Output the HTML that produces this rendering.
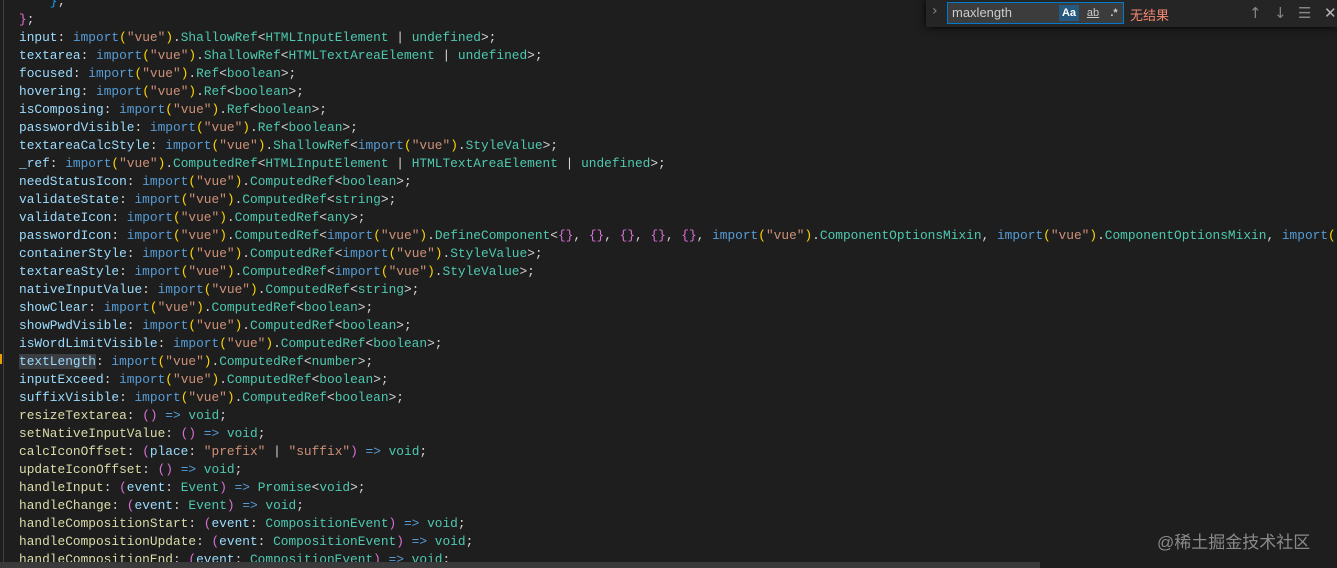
<!DOCTYPE html>
<html><head><meta charset="utf-8"><style>
html,body{margin:0;padding:0;background:#1e1e1e;width:1337px;height:568px;overflow:hidden;position:relative}
#code{position:absolute;left:19px;top:-7px;font-family:"Liberation Mono",monospace;font-size:12.83px;line-height:18px;color:#d4d4d4;white-space:pre}
.p{color:#9cdcfe}.f{color:#dcdcaa}.k{color:#569cd6}.s{color:#ce9178}.t{color:#4ec9b0}.y{color:#ffd700}.m{color:#da70d6}.b{color:#179fff}
.sel{background:#3a3d41}
#guide{position:absolute;left:3px;top:0;width:1px;height:568px;background:#404040}
#mark{position:absolute;left:0;top:354px;width:2px;height:10px;background:#e5a000}
#find{position:absolute;left:926px;top:0;width:411px;height:27px;background:#252526;box-shadow:0 0 8px #000}
#inp{position:absolute;left:947px;top:2px;width:175px;height:20px;border:1px solid #007acc;background:#3c3c3c;font:13px "Liberation Sans",sans-serif;color:#ccc;line-height:20px;box-sizing:content-box}
#inp span.v{position:absolute;left:4px;top:0}
.opt{position:absolute;top:2px;height:16px;font:11px "Liberation Sans",sans-serif;color:#ccc;line-height:16px;text-align:center}
#nores{position:absolute;left:1130px;top:5px;font:13px "Liberation Sans","Noto Sans CJK SC",sans-serif;color:#f48771}
.ic{position:absolute;top:4px;color:#c5c5c5;font:15px "DejaVu Sans",sans-serif;opacity:.6}
#wm{position:absolute;left:1157px;top:528px;font:17px "Liberation Sans","Noto Sans CJK SC",sans-serif;color:#8a8a8a}
#sb{position:absolute;left:0;top:562px;width:1040px;height:6px;background:#3a3a3a}
</style></head><body>
<div id="guide"></div>
<div id="code"><span>    </span><span class="b">}</span>;
<span class="m">}</span>;
<span class="p">input</span>: <span class="k">import</span><span class="y">(</span><span class="s">"vue"</span><span class="y">)</span>.<span class="t">ShallowRef</span>&lt;<span class="t">HTMLInputElement</span> | <span class="t">undefined</span>&gt;;
<span class="p">textarea</span>: <span class="k">import</span><span class="y">(</span><span class="s">"vue"</span><span class="y">)</span>.<span class="t">ShallowRef</span>&lt;<span class="t">HTMLTextAreaElement</span> | <span class="t">undefined</span>&gt;;
<span class="p">focused</span>: <span class="k">import</span><span class="y">(</span><span class="s">"vue"</span><span class="y">)</span>.<span class="t">Ref</span>&lt;<span class="t">boolean</span>&gt;;
<span class="p">hovering</span>: <span class="k">import</span><span class="y">(</span><span class="s">"vue"</span><span class="y">)</span>.<span class="t">Ref</span>&lt;<span class="t">boolean</span>&gt;;
<span class="p">isComposing</span>: <span class="k">import</span><span class="y">(</span><span class="s">"vue"</span><span class="y">)</span>.<span class="t">Ref</span>&lt;<span class="t">boolean</span>&gt;;
<span class="p">passwordVisible</span>: <span class="k">import</span><span class="y">(</span><span class="s">"vue"</span><span class="y">)</span>.<span class="t">Ref</span>&lt;<span class="t">boolean</span>&gt;;
<span class="p">textareaCalcStyle</span>: <span class="k">import</span><span class="y">(</span><span class="s">"vue"</span><span class="y">)</span>.<span class="t">ShallowRef</span>&lt;<span class="k">import</span><span class="y">(</span><span class="s">"vue"</span><span class="y">)</span>.<span class="t">StyleValue</span>&gt;;
<span class="p">_ref</span>: <span class="k">import</span><span class="y">(</span><span class="s">"vue"</span><span class="y">)</span>.<span class="t">ComputedRef</span>&lt;<span class="t">HTMLInputElement</span> | <span class="t">HTMLTextAreaElement</span> | <span class="t">undefined</span>&gt;;
<span class="p">needStatusIcon</span>: <span class="k">import</span><span class="y">(</span><span class="s">"vue"</span><span class="y">)</span>.<span class="t">ComputedRef</span>&lt;<span class="t">boolean</span>&gt;;
<span class="p">validateState</span>: <span class="k">import</span><span class="y">(</span><span class="s">"vue"</span><span class="y">)</span>.<span class="t">ComputedRef</span>&lt;<span class="t">string</span>&gt;;
<span class="p">validateIcon</span>: <span class="k">import</span><span class="y">(</span><span class="s">"vue"</span><span class="y">)</span>.<span class="t">ComputedRef</span>&lt;<span class="t">any</span>&gt;;
<span class="p">passwordIcon</span>: <span class="k">import</span><span class="y">(</span><span class="s">"vue"</span><span class="y">)</span>.<span class="t">ComputedRef</span>&lt;<span class="k">import</span><span class="y">(</span><span class="s">"vue"</span><span class="y">)</span>.<span class="t">DefineComponent</span>&lt;<span class="m">{}</span>, <span class="m">{}</span>, <span class="m">{}</span>, <span class="m">{}</span>, <span class="m">{}</span>, <span class="k">import</span><span class="y">(</span><span class="s">"vue"</span><span class="y">)</span>.<span class="t">ComponentOptionsMixin</span>, <span class="k">import</span><span class="y">(</span><span class="s">"vue"</span><span class="y">)</span>.<span class="t">ComponentOptionsMixin</span>, <span class="k">import</span><span class="y">(</span>
<span class="p">containerStyle</span>: <span class="k">import</span><span class="y">(</span><span class="s">"vue"</span><span class="y">)</span>.<span class="t">ComputedRef</span>&lt;<span class="k">import</span><span class="y">(</span><span class="s">"vue"</span><span class="y">)</span>.<span class="t">StyleValue</span>&gt;;
<span class="p">textareaStyle</span>: <span class="k">import</span><span class="y">(</span><span class="s">"vue"</span><span class="y">)</span>.<span class="t">ComputedRef</span>&lt;<span class="k">import</span><span class="y">(</span><span class="s">"vue"</span><span class="y">)</span>.<span class="t">StyleValue</span>&gt;;
<span class="p">nativeInputValue</span>: <span class="k">import</span><span class="y">(</span><span class="s">"vue"</span><span class="y">)</span>.<span class="t">ComputedRef</span>&lt;<span class="t">string</span>&gt;;
<span class="p">showClear</span>: <span class="k">import</span><span class="y">(</span><span class="s">"vue"</span><span class="y">)</span>.<span class="t">ComputedRef</span>&lt;<span class="t">boolean</span>&gt;;
<span class="p">showPwdVisible</span>: <span class="k">import</span><span class="y">(</span><span class="s">"vue"</span><span class="y">)</span>.<span class="t">ComputedRef</span>&lt;<span class="t">boolean</span>&gt;;
<span class="p">isWordLimitVisible</span>: <span class="k">import</span><span class="y">(</span><span class="s">"vue"</span><span class="y">)</span>.<span class="t">ComputedRef</span>&lt;<span class="t">boolean</span>&gt;;
<span class="p sel">textLength</span>: <span class="k">import</span><span class="y">(</span><span class="s">"vue"</span><span class="y">)</span>.<span class="t">ComputedRef</span>&lt;<span class="t">number</span>&gt;;
<span class="p">inputExceed</span>: <span class="k">import</span><span class="y">(</span><span class="s">"vue"</span><span class="y">)</span>.<span class="t">ComputedRef</span>&lt;<span class="t">boolean</span>&gt;;
<span class="p">suffixVisible</span>: <span class="k">import</span><span class="y">(</span><span class="s">"vue"</span><span class="y">)</span>.<span class="t">ComputedRef</span>&lt;<span class="t">boolean</span>&gt;;
<span class="f">resizeTextarea</span>: <span class="m">()</span> <span class="k">=&gt;</span> <span class="t">void</span>;
<span class="f">setNativeInputValue</span>: <span class="m">()</span> <span class="k">=&gt;</span> <span class="t">void</span>;
<span class="f">calcIconOffset</span>: <span class="m">(</span><span class="p">place</span>: <span class="s">"prefix"</span> | <span class="s">"suffix"</span><span class="m">)</span> <span class="k">=&gt;</span> <span class="t">void</span>;
<span class="f">updateIconOffset</span>: <span class="m">()</span> <span class="k">=&gt;</span> <span class="t">void</span>;
<span class="f">handleInput</span>: <span class="m">(</span><span class="p">event</span>: <span class="t">Event</span><span class="m">)</span> <span class="k">=&gt;</span> <span class="t">Promise</span>&lt;<span class="t">void</span>&gt;;
<span class="f">handleChange</span>: <span class="m">(</span><span class="p">event</span>: <span class="t">Event</span><span class="m">)</span> <span class="k">=&gt;</span> <span class="t">void</span>;
<span class="f">handleCompositionStart</span>: <span class="m">(</span><span class="p">event</span>: <span class="t">CompositionEvent</span><span class="m">)</span> <span class="k">=&gt;</span> <span class="t">void</span>;
<span class="f">handleCompositionUpdate</span>: <span class="m">(</span><span class="p">event</span>: <span class="t">CompositionEvent</span><span class="m">)</span> <span class="k">=&gt;</span> <span class="t">void</span>;
<span class="f">handleCompositionEnd</span>: <span class="m">(</span><span class="p">event</span>: <span class="t">CompositionEvent</span><span class="m">)</span> <span class="k">=&gt;</span> <span class="t">void</span>;</div>
<div id="mark"></div>
<div id="sb"></div>
<div id="find">
</div>
<div class="ic" style="left:932px;top:3px;font-size:14px">›</div>
<div id="inp"><span class="v">maxlength</span>
<span class="opt" style="left:111px;width:20px;background:#26597e;color:#fff;font-weight:bold">Aa</span>
<span class="opt" style="left:135px;width:20px;text-decoration:underline">ab</span>
<span class="opt" style="left:157px;width:18px;font-weight:bold">.*</span>
</div>
<div id="nores">无结果</div>
<div class="ic" style="left:1249px">↑</div>
<div class="ic" style="left:1274px">↓</div>
<div class="ic" style="left:1298px">☰</div>
<div class="ic" style="left:1324px;opacity:.9">✕</div>
<div id="wm">@稀土掘金技术社区</div>
</body></html>
